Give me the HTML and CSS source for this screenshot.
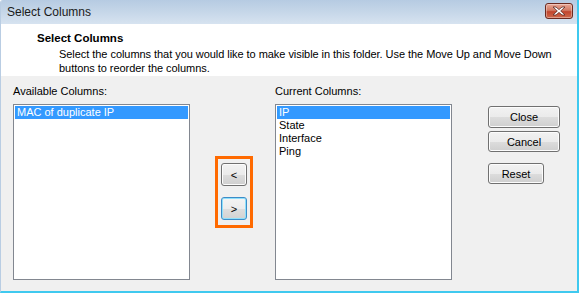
FILE: index.html
```html
<!DOCTYPE html>
<html>
<head>
<meta charset="utf-8">
<link rel="stylesheet" href="styles.css">
</head>
<body>
<div class="window">
  <div class="titlebar">
    <span class="title">Select Columns</span>
    <button class="close-x" aria-label="Close">
      <svg width="14" height="10" viewBox="0 0 14 10"><path d="M1 1 L4 1 L7 3.6 L10 1 L13 1 L8.7 5 L13 9 L10 9 L7 6.4 L4 9 L1 9 L5.3 5 Z" fill="#fff" stroke="#5a2a22" stroke-width="0.8" stroke-linejoin="round"/></svg>
    </button>
  </div>
  <div class="header">
    <div class="h-title">Select Columns</div>
    <div class="h-desc">Select the columns that you would like to make visible in this folder. Use the Move Up and Move Down buttons to reorder the columns.</div>
  </div>
  <div class="content">
    <div class="col list-col">
      <div class="label">Available Columns:</div>
      <div class="listbox">
        <div class="item selected">MAC of duplicate IP</div>
      </div>
    </div>
    <div class="col mid-col">
      <div class="move-box">
        <button class="btn small">&lt;</button>
        <button class="btn small focus">&gt;</button>
      </div>
    </div>
    <div class="col list-col">
      <div class="label">Current Columns:</div>
      <div class="listbox">
        <div class="item selected">IP</div>
        <div class="item">State</div>
        <div class="item">Interface</div>
        <div class="item">Ping</div>
      </div>
    </div>
    <div class="col btn-col">
      <button class="btn wide">Close</button>
      <button class="btn wide cancel">Cancel</button>
      <button class="btn reset">Reset</button>
    </div>
  </div>
</div>
</body>
</html>
```

FILE: styles.css
```css
* { box-sizing: border-box; }
html, body { margin: 0; padding: 0; background: #fff; }
body { font-family: "Liberation Sans", Arial, sans-serif; font-size: 11px; color: #000; }

.window {
  width: 579px;
  height: 293px;
  display: flex;
  flex-direction: column;
  border-left: 1px solid #b9cde3;
  border-right: 2px solid #3fc9ef;
  border-bottom: 2px solid #3fc9ef;
  border-top-left-radius: 3px;
  overflow: hidden;
  background: #f0f0f0;
}

.titlebar {
  height: 24px;
  flex: none;
  display: flex;
  align-items: center;
  justify-content: space-between;
  padding: 0 4px 0 6px;
  background: linear-gradient(#b6cbe2, #c9d9ea 60%, #d7e3f0);
}
.title { font-size: 12px; color: #1a1a1a; }
.close-x {
  width: 28px;
  height: 16px;
  margin-top: -3px;
  border: 1px solid #6b2a20;
  border-radius: 3px;
  padding: 0;
  display: flex;
  align-items: center;
  justify-content: center;
  background: linear-gradient(#e9a897, #d27a63 45%, #c1452d 55%, #cf6a4d);
  box-shadow: inset 0 0 0 1px rgba(255,255,255,0.35);
}

.header {
  height: 52px;
  flex: none;
  background: #fff;
  padding: 7px 20px 0 36px;
}
.h-title { font-weight: bold; font-size: 11.5px; line-height: 14px; }
.h-desc { margin: 2px 0 0 22px; line-height: 14px; letter-spacing: -0.05px; }

.content {
  flex: 1;
  display: flex;
  padding: 9px 0 0 12px;
}
.col { display: flex; flex-direction: column; }
.list-col { width: 177px; }
.label { height: 19px; line-height: 13px; }
.listbox {
  height: 176px;
  background: #fff;
  border: 1px solid #828790;
  padding: 1px;
}
.item { height: 13px; line-height: 13px; padding-left: 2px; white-space: nowrap; }
.item.selected { background: #3399ff; color: #fff; }

.mid-col {
  width: 85px;
  padding-top: 19px;
  height: 195px;
  align-items: center;
  justify-content: center;
}
.move-box {
  margin-left: 3px;
  border: 3px solid #ff6a00;
  padding: 4px 3px 5px;
  display: flex;
  flex-direction: column;
  gap: 11px;
  width: 38px;
}

.btn {
  font-family: "Liberation Sans", Arial, sans-serif;
  font-size: 11px;
  color: #000;
  border: 1px solid #707070;
  border-radius: 3px;
  background: linear-gradient(#f2f2f2 0%, #ebebeb 50%, #dddddd 50%, #cfcfcf 100%);
  box-shadow: inset 0 0 0 1px #fcfcfc;
  padding: 0;
  display: flex;
  align-items: center;
  justify-content: center;
}
.btn.small { width: 26px; height: 23px; }
.btn.focus {
  border-color: #3c8cc8;
  box-shadow: inset 0 0 0 1px #8fe0fb;
  background: linear-gradient(#f4f4f4 0%, #ececec 50%, #dedede 50%, #d2d2d2 100%);
}

.btn-col { padding-left: 36px; padding-top: 21px; }
.btn.wide { width: 72px; height: 22px; }
.btn.cancel { margin-top: 3px; height: 21px; }
.btn.reset { width: 56px; height: 21px; margin-top: 11px; }
```
